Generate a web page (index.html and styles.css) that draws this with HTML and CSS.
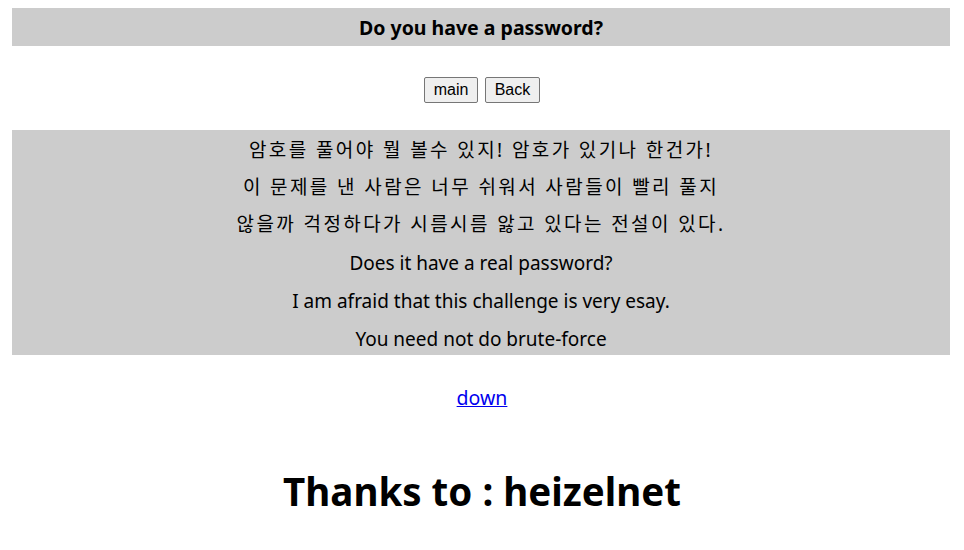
FILE: index.html
```html
<!DOCTYPE html>
<html lang="ko">
<head>
  <meta charset="UTF-8">
  <title>Do you have a password?</title>
  <link rel="stylesheet" href="styles.css">
</head>
<body>
  <div class="title-bar">Do you have a password?</div>

  <div class="nav">
    <button class="btn">main</button>
    <button class="btn">Back</button>
  </div>

  <div class="story">
    <p class="ko">암호를 풀어야 뭘 볼수 있지! 암호가 있기나 한건가!</p>
    <p class="ko">이 문제를 낸 사람은 너무 쉬워서 사람들이 빨리 풀지</p>
    <p class="ko">않을까 걱정하다가 시름시름 앓고 있다는 전설이 있다.</p>
    <p class="en">Does it have a real password?</p>
    <p class="en">I am afraid that this challenge is very esay.</p>
    <p class="en">You need not do brute-force</p>
  </div>

  <div class="down"><a href="#">down</a></div>

  <h1 class="thanks">Thanks to : heizelnet</h1>
</body>
</html>
```

FILE: styles.css
```css
body {
  margin: 8px;
  font-family: "Noto Sans", "Noto Sans CJK KR", sans-serif;
  color: #000;
  background: #fff;
}

.title-bar {
  margin: 0 6px 0 4px;
  height: 38px;
  line-height: 40px;
  background-color: #cccccc;
  text-align: center;
  font-size: 19.5px;
  font-weight: bold;
}

.nav {
  margin-top: 31px;
  text-align: center;
}

.btn {
  font-family: "Liberation Sans", Arial, sans-serif;
  font-size: 16px;
  padding: 2px 9px;
  margin: 0 1px;
  height: 26px;
  background-color: #efefef;
  border: 1px solid #767676;
  border-radius: 2px;
  color: #000;
}

.story {
  margin: 27px 6px 0 4px;
  background-color: #cccccc;
  text-align: center;
  padding: 2px 0 0;
  height: 223px;
}

.story p {
  margin: 0;
}

.story p.ko {
  font-size: 19px;
  letter-spacing: 2.4px;
  height: 37px;
  line-height: 37px;
}

.story p.en {
  font-size: 19px;
  height: 38px;
  line-height: 40px;
}

.down {
  margin-top: 29px;
  text-align: center;
  font-size: 19.5px;
}

.down a {
  color: #0000ee;
}

.thanks {
  margin: 54px 0 0;
  text-align: center;
  font-size: 38.5px;
  font-weight: bold;
}
```
